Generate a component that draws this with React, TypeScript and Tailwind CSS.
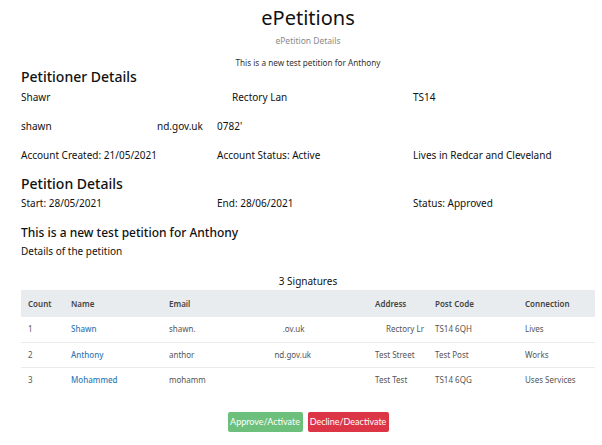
import React from "react";

const rows = [
  { n: "1", name: "Shawn", e1: "shawn.", e2: ".ov.uk", e2ml: "ml-[87px]", addr: "Rectory Lr", addrCls: "pl-[11px]", pc: "TS14 6QH", con: "Lives" },
  { n: "2", name: "Anthony", e1: "anthor", e2: "nd.gov.uk", e2ml: "ml-[80px]", addr: "Test Street", addrCls: "", pc: "Test Post", con: "Works" },
  { n: "3", name: "Mohammed", e1: "mohamm", e2: "", e2ml: "", addr: "Test Test", addrCls: "", pc: "TS14 6QG", con: "Uses Services" },
];

export default function App() {
  return (
    <div className="w-[602px] h-[445px] bg-white text-[#111] font-['Noto_Sans',sans-serif] overflow-hidden pl-[21px] pr-[7px]">
      <div className="flex flex-col items-center pt-[5px]">
        <h1 className="text-[20px] leading-[26px] text-[#111]">ePetitions</h1>
        <div className="text-[8.5px] leading-[12px] mt-[4px] text-[#8a8a8a]">ePetition Details</div>
        <div className="text-[8.2px] leading-[12px] mt-[10px] text-[#333]">This is a new test petition for Anthony</div>
      </div>
      <h2 className="text-[14px] leading-[18px] font-medium text-[#111] mt-[-1px]">Petitioner Details</h2>
      <div className="grid grid-cols-[196px_196px_1fr] text-[10px] leading-[14px] mt-[4px]">
        <div>Shawr</div>
        <div className="pl-[15px]">Rectory Lan</div>
        <div>TS14</div>
      </div>
      <div className="flex text-[10px] leading-[14px] mt-[15px]">
        <span className="w-[136px]">shawn</span>
        <span className="w-[60px]">nd.gov.uk</span>
        <span>0782'</span>
      </div>
      <div className="grid grid-cols-[196px_196px_1fr] text-[10px] leading-[14px] mt-[15px]">
        <div>Account Created: 21/05/2021</div>
        <div>Account Status: Active</div>
        <div>Lives in Redcar and Cleveland</div>
      </div>
      <h2 className="text-[14px] leading-[18px] font-medium text-[#111] mt-[13px]">Petition Details</h2>
      <div className="grid grid-cols-[196px_196px_1fr] text-[10px] leading-[14px] mt-[3px]">
        <div>Start: 28/05/2021</div>
        <div>End: 28/06/2021</div>
        <div>Status: Approved</div>
      </div>
      <h3 className="text-[12px] leading-[16px] font-medium text-[#111] mt-[15px]">This is a new test petition for Anthony</h3>
      <div className="text-[10px] leading-[14px] mt-[3px]">Details of the petition</div>
      <div className="text-center text-[10px] leading-[14px] text-[#111] mt-[16px]">3 Signatures</div>
      <table className="w-[574px] mt-[2px] text-[8px] border-collapse">
        <thead>
          <tr className="bg-[#e9ecef] h-[27px] text-left text-[#444]">
            <th className="font-semibold pl-[7px] w-[50px]">Count</th>
            <th className="font-semibold w-[98px]">Name</th>
            <th className="font-semibold w-[206px]">Email</th>
            <th className="font-semibold w-[60px]">Address</th>
            <th className="font-semibold w-[90px]">Post Code</th>
            <th className="font-semibold">Connection</th>
          </tr>
        </thead>
        <tbody className="text-[#555]">
          {rows.map((r, i) => (
            <tr key={r.n} className={`h-[25px] ${i < 2 ? "border-b border-[#e9ecef]" : ""}`}>
              <td className="pl-[7px]">{r.n}</td>
              <td className="text-[#337ab7] font-medium">{r.name}</td>
              <td className="whitespace-nowrap">
                <span>{r.e1}</span>
                {r.e2 && <span className={r.e2ml}>{r.e2}</span>}
              </td>
              <td className={`whitespace-nowrap ${r.addrCls}`}>{r.addr}</td>
              <td>{r.pc}</td>
              <td className="whitespace-nowrap">{r.con}</td>
            </tr>
          ))}
        </tbody>
      </table>
      <div className="flex justify-center gap-[5px] mt-[20px] font-['Lato',sans-serif] text-[9px]">
        <button className="w-[75px] h-[20px] bg-[#6cc07c] text-white rounded-[2px]">Approve/Activate</button>
        <button className="w-[81px] h-[20px] bg-[#dc3545] text-white rounded-[2px]">Decline/Deactivate</button>
      </div>
    </div>
  );
}
